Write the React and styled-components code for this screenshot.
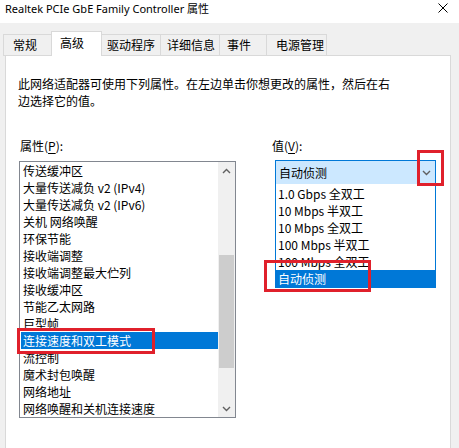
import React from 'react';
import styled, { createGlobalStyle } from 'styled-components';

const GlobalStyle = createGlobalStyle`
    html, body {
        margin: 0;
        padding: 0;
        background: #f0f0f0;
    }
    body {
        font-family: "Noto Sans CJK SC", "Noto Sans", sans-serif;
        font-size: 12px;
        color: #000;
    }
`;

const Window = styled.div`
    width: 459px;
    height: 448px;
    overflow: hidden;
    background: #f0f0f0;
    display: flex;
    flex-direction: column;
`;

const TitleBar = styled.div`
    height: 23px;
    flex: 0 0 23px;
    background: #fff;
    display: flex;
    align-items: center;
    justify-content: space-between;
    padding: 0 11px 0 5px;
    box-sizing: border-box;
`;

const Title = styled.span`
    font-family: "Noto Sans", "Noto Sans CJK SC", sans-serif;
    font-size: 11px;
    line-height: 16px;
    margin-top: -6px;
`;

const CloseIcon = styled.svg`
    width: 10px;
    height: 10px;
    margin-top: -7px;
`;

const TabStrip = styled.div`
    height: 32px;
    flex: 0 0 32px;
    display: flex;
    align-items: flex-end;
    padding-left: 3px;
    box-sizing: border-box;
    position: relative;
    z-index: 1;
`;

const Tab = styled.div`
    box-sizing: border-box;
    width: ${(p) => p.$w}px;
    height: ${(p) => (p.$active ? 25 : 22)}px;
    margin-bottom: -1px;
    margin-left: -1px;
    padding-left: ${(p) => p.$pad}px;
    border: 1px solid #d9d9d9;
    border-bottom: ${(p) => (p.$active ? 'none' : '1px solid #d9d9d9')};
    background: ${(p) => (p.$active ? '#fff' : '#f0f0f0')};
    line-height: ${(p) => (p.$active ? 21 : 20)}px;
    white-space: nowrap;
    position: relative;
    z-index: ${(p) => (p.$active ? 2 : 1)};
    &:first-child {
        margin-left: 0;
    }
`;

const Panel = styled.div`
    margin-left: 5px;
    width: 446px;
    flex: 1;
    min-height: 400px;
    box-sizing: border-box;
    border: 1px solid #d9d9d9;
    background: #fff;
    padding: 19px 0 0 12px;
`;

const Description = styled.p`
    margin: 0;
    line-height: 17px;
`;

const Columns = styled.div`
    margin-top: 28px;
    display: flex;
    gap: 36px;
`;

const Column = styled.div`
    display: flex;
    flex-direction: column;
    margin-left: ${(p) => p.$ml || 0}px;
`;

const Label = styled.div`
    line-height: 17px;
    margin-left: ${(p) => p.$ml || 0}px;
    margin-bottom: ${(p) => p.$mb}px;
    u {
        text-decoration: underline;
        text-underline-offset: 2px;
    }
`;

const ListBox = styled.div`
    position: relative;
    width: 217px;
    height: 257px;
    box-sizing: border-box;
    border: 1px solid #828790;
    display: flex;
    background: #fff;
`;

const Items = styled.div`
    flex: 1;
    padding-left: 1px;
    overflow: hidden;
`;

const Row = styled.div`
    height: 17px;
    line-height: 17px;
    padding-left: 2px;
    white-space: nowrap;
    background: ${(p) => (p.$selected ? '#0078d7' : 'transparent')};
    color: ${(p) => (p.$selected ? '#fff' : '#000')};
`;

const ScrollBar = styled.div`
    width: 17px;
    background: #f0f0f0;
    display: flex;
    flex-direction: column;
`;

const ArrowBox = styled.div`
    height: 17px;
    display: flex;
    align-items: center;
    justify-content: center;
`;

const Track = styled.div`
    flex: 1;
    padding: 76px 1px 0 1px;
`;

const Thumb = styled.div`
    height: 113px;
    background: #cdcdcd;
`;

const Combo = styled.div`
    position: relative;
    width: 161px;
    height: 25px;
    box-sizing: border-box;
    margin-left: 3px;
    border: 1px solid #0078d7;
    background: #cce8ff;
    display: flex;
    align-items: center;
    justify-content: space-between;
    padding: 0 4px 0 3px;
`;

const DropList = styled.div`
    position: absolute;
    top: 100%;
    left: -1px;
    width: 161px;
    box-sizing: border-box;
    border: 1px solid #0078d7;
    border-top: none;
    background: #fff;
    padding-top: 1px;
`;

const DropRow = styled(Row)`
    padding-left: 2px;
`;

const RedBox = styled.div`
    position: absolute;
    left: ${(p) => p.$x}px;
    top: ${(p) => p.$y}px;
    width: ${(p) => p.$w}px;
    height: ${(p) => p.$h}px;
    box-sizing: border-box;
    border: 3px solid #e0202b;
    pointer-events: none;
    z-index: 5;
`;

const Chevron = ({ up }) => (
    <svg width="9" height="6" viewBox="0 0 9 6">
        <path
            d={up ? 'M1 5 L4.5 1.5 L8 5' : 'M1 1 L4.5 4.5 L8 1'}
            fill="none"
            stroke="#606060"
            strokeWidth="1.4"
        />
    </svg>
);

const tabs = [
    { label: '常规', w: 49, pad: 9 },
    { label: '高级', w: 51, pad: 8, active: true },
    { label: '驱动程序', w: 60, pad: 5 },
    { label: '详细信息', w: 60, pad: 6 },
    { label: '事件', w: 48, pad: 7 },
    { label: '电源管理', w: 61, pad: 9 },
];

const properties = [
    '传送缓冲区',
    '大量传送减负 v2 (IPv4)',
    '大量传送减负 v2 (IPv6)',
    '关机 网络唤醒',
    '环保节能',
    '接收端调整',
    '接收端调整最大伫列',
    '接收缓冲区',
    '节能乙太网路',
    '巨型帧',
    '连接速度和双工模式',
    '流控制',
    '魔术封包唤醒',
    '网络地址',
    '网络唤醒和关机连接速度',
];

const values = [
    '1.0 Gbps 全双工',
    '10 Mbps 半双工',
    '10 Mbps 全双工',
    '100 Mbps 半双工',
    '100 Mbps 全双工',
    '自动侦测',
];

const App = () => {
    return (
        <>
            <GlobalStyle />
            <Window>
                <TitleBar>
                    <Title>Realtek PCIe GbE Family Controller 属性</Title>
                    <CloseIcon viewBox="0 0 10 10">
                        <path d="M0.5 0.5 L9.5 9.5 M9.5 0.5 L0.5 9.5" stroke="#000" strokeWidth="1" />
                    </CloseIcon>
                </TitleBar>
                <TabStrip>
                    {tabs.map((t) => (
                        <Tab key={t.label} $w={t.w} $pad={t.pad} $active={t.active}>
                            {t.label}
                        </Tab>
                    ))}
                </TabStrip>
                <Panel>
                    <Description>
                        此网络适配器可使用下列属性。在左边单击你想更改的属性，然后在右
                        <br />
                        边选择它的值。
                    </Description>
                    <Columns>
                        <Column $ml={1}>
                            <Label $ml={1} $mb={7}>
                                属性(<u>P</u>):
                            </Label>
                            <ListBox>
                                <Items>
                                    {properties.map((p, i) => (
                                        <Row key={p} $selected={i === 10}>
                                            {p}
                                        </Row>
                                    ))}
                                </Items>
                                <ScrollBar>
                                    <ArrowBox>
                                        <Chevron up />
                                    </ArrowBox>
                                    <Track>
                                        <Thumb />
                                    </Track>
                                    <ArrowBox>
                                        <Chevron />
                                    </ArrowBox>
                                </ScrollBar>
                                <RedBox $x={-3} $y={166} $w={138} $h={26} />
                            </ListBox>
                        </Column>
                        <Column>
                            <Label $mb={6}>
                                值(<u>V</u>):
                            </Label>
                            <Combo>
                                <span>自动侦测</span>
                                <Chevron />
                                <RedBox $x={141} $y={-11} $w={27} $h={36} />
                                <DropList>
                                    {values.map((v, i) => (
                                        <DropRow key={v} $selected={i === 5}>
                                            {v}
                                        </DropRow>
                                    ))}
                                    <RedBox $x={-12} $y={76} $w={107} $h={32} />
                                </DropList>
                            </Combo>
                        </Column>
                    </Columns>
                </Panel>
            </Window>
        </>
    );
};

export default App;
